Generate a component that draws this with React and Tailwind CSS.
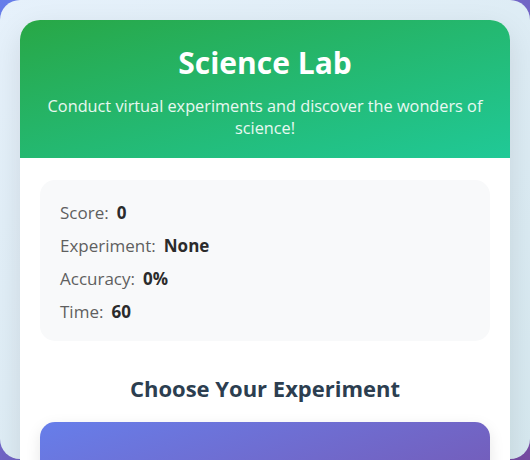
export default function App() {
    const stats = [
        { label: 'Score:', value: '0' },
        { label: 'Experiment:', value: 'None' },
        { label: 'Accuracy:', value: '0%' },
        { label: 'Time:', value: '60' },
    ]

    return (
        <div className="min-h-screen bg-gradient-to-br from-[#667eea] to-[#764ba2] font-['Open_Sans',sans-serif]">
            <div className="h-[459px] rounded-[20px] bg-gradient-to-br from-[#e6f1fb] to-[#d6e8ef] px-5 pt-5">
                <div className="bg-white rounded-t-[20px] shadow-[0_10px_30px_rgba(0,0,0,0.1)] overflow-hidden h-[600px]">
                    {/* Header */}
                    <header className="bg-gradient-to-br from-[#28a745] to-[#20c997] text-white text-center px-5 pt-[25px] h-[138px]">
                        <h1 className="text-[30px] leading-[36px] font-bold">Science Lab</h1>
                        <p className="mt-[14px] text-[16.3px] leading-[22px] text-white/90">
                            Conduct virtual experiments and discover the wonders of science!
                        </p>
                    </header>

                    <div className="px-5 pt-[22px]">
                        {/* Stats */}
                        <div className="bg-[#f8f9fa] rounded-[15px] px-5 pt-[21px] pb-[18px] flex flex-col gap-[10px]">
                            {stats.map((s) => (
                                <div key={s.label} className="flex items-center gap-2 text-[17px] leading-[23px]">
                                    <span className="text-[#5f5f5f]">{s.label}</span>
                                    <span className="font-bold text-[#2b2b2b]">{s.value}</span>
                                </div>
                            ))}
                        </div>

                        <h2 className="mt-[34px] mb-5 text-center text-[22px] leading-[27px] font-bold text-[#2c3e50]">
                            Choose Your Experiment
                        </h2>

                        <div className="rounded-[15px] bg-gradient-to-br from-[#667eea] to-[#764ba2] shadow-[0_5px_15px_rgba(0,0,0,0.1)] h-[160px] pt-[33px] text-center">
                            <div className="text-[22px] font-bold text-[#2c3e50]/70">Lab</div>
                        </div>
                    </div>
                </div>
            </div>
        </div>
    )
}
